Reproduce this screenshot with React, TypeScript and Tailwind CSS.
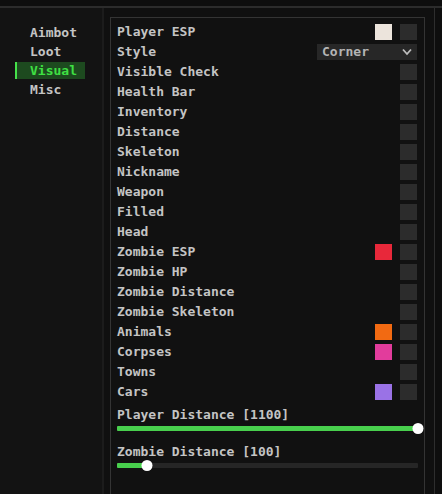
import React from "react";

const font = { fontFamily: '"DejaVu Sans Mono", "Liberation Mono", monospace' };

type Row = { label: string; color?: string; dropdown?: boolean };

const rows: Row[] = [
  { label: "Player ESP", color: "#ece4dc" },
  { label: "Style", dropdown: true },
  { label: "Visible Check" },
  { label: "Health Bar" },
  { label: "Inventory" },
  { label: "Distance" },
  { label: "Skeleton" },
  { label: "Nickname" },
  { label: "Weapon" },
  { label: "Filled" },
  { label: "Head" },
  { label: "Zombie ESP", color: "#e8283a" },
  { label: "Zombie HP" },
  { label: "Zombie Distance" },
  { label: "Zombie Skeleton" },
  { label: "Animals", color: "#f26a12" },
  { label: "Corpses", color: "#e23c9c" },
  { label: "Towns" },
  { label: "Cars", color: "#9a72e6" },
];

function Slider({ label, pct }: { label: string; pct: number }) {
  return (
    <div className="flex flex-col">
      <div className="h-[16px] leading-[16px] text-[13px] font-bold text-[#c4c4c4]">{label}</div>
      <div className="relative h-[10px] w-[301px] flex items-center">
        <div className="h-[5px] w-full bg-[#262626] rounded-[1px]">
          <div className="h-full bg-[#48cf4d] rounded-[1px]" style={{ width: `${pct}%` }} />
        </div>
        <div
          className="absolute w-[11px] h-[11px] rounded-full bg-white -translate-x-1/2"
          style={{ left: `${pct}%` }}
        />
      </div>
    </div>
  );
}

export default function App() {
  const side = ["Aimbot", "Loot", "Visual", "Misc"];
  return (
    <div className="w-[442px] h-[494px] bg-[#101010] flex flex-col overflow-hidden" style={font}>
      <div className="h-[8px] bg-[#0e0e0e] border-b-2 border-[#2c2c2c] shrink-0" />
      <div className="flex flex-1 min-h-0">
        <div className="w-[104px] bg-[#131313] border-r-2 border-[#1c1c1c] flex flex-col pt-[15px] shrink-0">
          {side.map((s) => {
            const active = s === "Visual";
            return (
              <div key={s} className="h-[19px] flex items-center">
                {active ? (
                  <div className="ml-[15px] w-[70px] h-[17px] bg-[#1d4a1f] flex items-center border-l-2 border-[#45e24a]">
                    <span className="ml-[13px] text-[13px] font-bold text-[#3fe043]">{s}</span>
                  </div>
                ) : (
                  <span className="ml-[30px] text-[13px] font-bold text-[#c4c4c4]">{s}</span>
                )}
              </div>
            );
          })}
        </div>
        <div className="w-[6px] shrink-0" />
        <div className="w-[315px] shrink-0 mt-[9px] border-l border-t border-r border-[#343434] bg-[#111111] flex flex-col pl-[6px] pt-[4px]">
          {rows.map((r) => (
            <div key={r.label} className="h-[20px] flex items-center">
              <span className="text-[13px] font-bold text-[#c4c4c4] flex-1">{r.label}</span>
              {r.dropdown ? (
                <div className="w-[100px] h-[16px] bg-[#272727] flex items-center justify-between px-[5px] mr-[7px]">
                  <span className="text-[13px] font-bold text-[#b4b4b4]">Corner</span>
                  <svg width="10" height="8" viewBox="0 0 10 8">
                    <path d="M1 1.5 L5 6 L9 1.5" stroke="#bdbdbd" strokeWidth="1.8" fill="none" />
                  </svg>
                </div>
              ) : (
                <>
                  {r.color && (
                    <div className="w-[17px] h-[16px] mr-[8px]" style={{ background: r.color }} />
                  )}
                  <div className="w-[17px] h-[16px] bg-[#2c2c2c] mr-[7px]" />
                </>
              )}
            </div>
          ))}
          <div className="mt-[5px] flex flex-col gap-[11px]">
            <Slider label="Player Distance [1100]" pct={100} />
            <Slider label="Zombie Distance [100]" pct={10} />
          </div>
        </div>
        <div className="w-[9px] shrink-0" />
        <div className="w-[1px] bg-[#2e2e2e] shrink-0" />
        <div className="flex-1 bg-[#0e0e0e]" />
      </div>
    </div>
  );
}
